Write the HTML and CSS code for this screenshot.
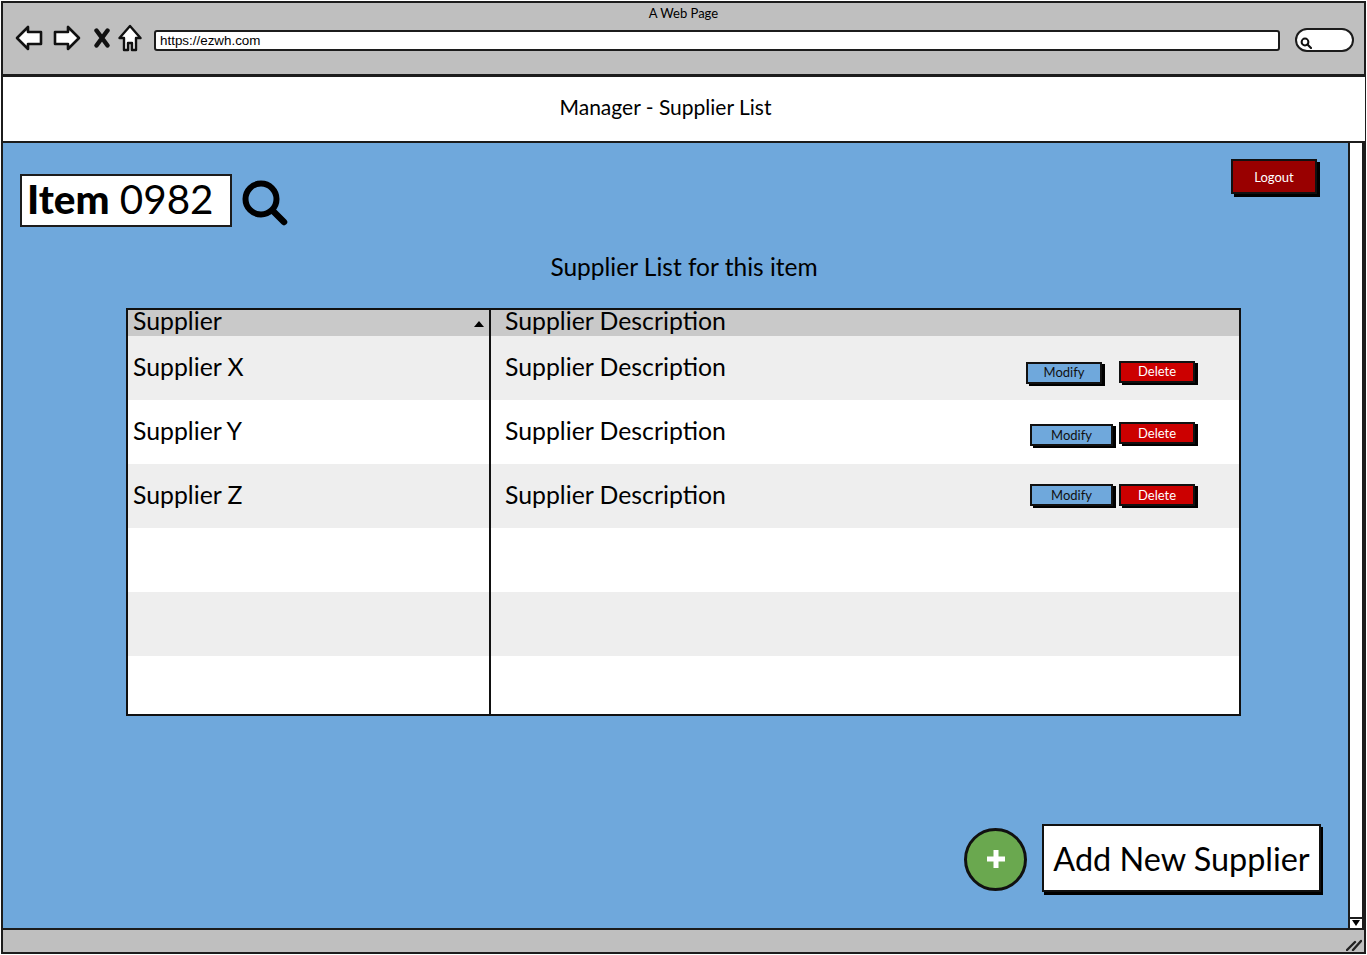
FILE: index.html
```html
<!DOCTYPE html>
<html lang="en">
<head>
    <meta charset="UTF-8">
    <meta name="viewport" content="width=device-width, initial-scale=1.0">
    <title>Manager - Supplier List</title>
    <link rel="stylesheet" href="styles.css">
</head>
<body>

    <div class="window">
        <div class="browser-bar">
            <div class="browser-title">A Web Page</div>
            <div class="browser-tools">
                <div class="nav-icons">
                    <svg class="nav-icon" width="28" height="26" viewBox="0 0 28 26"><path d="M2 13 L13 2 L13 7 L26 7 L26 19 L13 19 L13 24 Z" fill="#fff" stroke="#111" stroke-width="2.6" stroke-linejoin="round"/></svg>
                    <svg class="nav-icon" width="28" height="26" viewBox="0 0 28 26"><path d="M26 13 L15 2 L15 7 L2 7 L2 19 L15 19 L15 24 Z" fill="#fff" stroke="#111" stroke-width="2.6" stroke-linejoin="round"/></svg>
                    <svg class="nav-icon stop-icon" width="16" height="20" viewBox="0 0 16 20"><path d="M2.5 2.5 L13.5 17.5 M13.5 2.5 L2.5 17.5" fill="none" stroke="#111" stroke-width="4.4" stroke-linecap="round"/></svg>
                    <svg class="nav-icon home-icon" width="24" height="28" viewBox="0 0 24 28"><path d="M12 2 L22.5 14 L18 14 L18 26 L14 26 L14 19 L10 19 L10 26 L6 26 L6 14 L1.5 14 Z" fill="#fff" stroke="#111" stroke-width="2.4" stroke-linejoin="round"/></svg>
                </div>
                <div class="address-bar">https://ezwh.com</div>
                <div class="search-pill">
                    <svg width="12" height="12" viewBox="0 0 12 12"><circle cx="5" cy="5" r="3.4" fill="none" stroke="#111" stroke-width="2"/><path d="M7.5 7.5 L11 11" stroke="#111" stroke-width="2.2" stroke-linecap="round"/></svg>
                </div>
            </div>
        </div>

        <div class="page-title">Manager - Supplier List</div>

        <div class="content">
            <div class="main">
                <div class="top-row">
                    <div class="item-search">
                        <div class="item-box"><b>Item</b> 0982</div>
                        <svg width="46" height="46" viewBox="0 0 46 46"><circle cx="19" cy="19" r="15.5" fill="none" stroke="#000" stroke-width="6"/><path d="M31 31 L42 42" stroke="#000" stroke-width="6.5" stroke-linecap="round"/></svg>
                    </div>
                    <button class="btn btn-logout">Logout</button>
                </div>

                <h2 class="list-heading">Supplier List for this item</h2>

                <table class="supplier-table">
                    <thead>
                        <tr>
                            <th class="col-name">Supplier<span class="sort-arrow"></span></th>
                            <th class="col-desc">Supplier Description</th>
                        </tr>
                    </thead>
                    <tbody>
                        <tr>
                            <td class="col-name">Supplier X</td>
                            <td class="col-desc">
                                <div class="desc-row">
                                    Supplier Description
                                    <div class="actions actions-first">
                                        <button class="btn btn-modify">Modify</button>
                                        <button class="btn btn-delete">Delete</button>
                                    </div>
                                </div>
                            </td>
                        </tr>
                        <tr>
                            <td class="col-name">Supplier Y</td>
                            <td class="col-desc">
                                <div class="desc-row">
                                    Supplier Description
                                    <div class="actions actions-second">
                                        <button class="btn btn-modify btn-wide">Modify</button>
                                        <button class="btn btn-delete">Delete</button>
                                    </div>
                                </div>
                            </td>
                        </tr>
                        <tr>
                            <td class="col-name">Supplier Z</td>
                            <td class="col-desc">
                                <div class="desc-row">
                                    Supplier Description
                                    <div class="actions">
                                        <button class="btn btn-modify btn-wide">Modify</button>
                                        <button class="btn btn-delete">Delete</button>
                                    </div>
                                </div>
                            </td>
                        </tr>
                        <tr><td class="col-name"></td><td class="col-desc"></td></tr>
                        <tr><td class="col-name"></td><td class="col-desc"></td></tr>
                        <tr class="last-row"><td class="col-name"></td><td class="col-desc"></td></tr>
                    </tbody>
                </table>

                <div class="add-row">
                    <div class="add-circle">
                        <svg width="20" height="20" viewBox="0 0 20 20"><path d="M10 1 V19 M1 10 H19" stroke="#fff" stroke-width="5"/></svg>
                    </div>
                    <button class="btn-add">Add New Supplier</button>
                </div>
            </div>

            <div class="scrollbar">
                <div class="scroll-down"></div>
            </div>
        </div>

        <div class="status-bar">
            <svg width="16" height="12" viewBox="0 0 16 12"><path d="M1 11 L9 3 M7 11 L15 2" stroke="#222" stroke-width="2.4" stroke-linecap="round"/></svg>
        </div>
    </div>

</body>
</html>
```

FILE: styles.css
```css
* {
    box-sizing: border-box;
}
html, body {
    height: 100%;
}
body {
    margin: 0;
    padding: 1px 1px 1px 1px;
    overflow: hidden;
    background: #fff;
    color: #000;
    font-family: Lato, "Open Sans", sans-serif;
}
button {
    font-family: inherit;
    cursor: pointer;
}
.window {
    width: 1365px;
    height: 953px;
    border: 2px solid #1c1c1c;
    display: flex;
    flex-direction: column;
}

/* browser chrome */
.browser-bar {
    height: 71px;
    background: #bfbfbf;
    padding-top: 2px;
}
.browser-title {
    text-align: center;
    font-size: 13px;
    line-height: 16px;
}
.browser-tools {
    display: flex;
    align-items: center;
    padding-left: 12px;
    margin-top: 2px;
}
.nav-icons {
    display: flex;
    align-items: center;
    width: 139px;
}
.nav-icon {
    margin-right: 10px;
}
.stop-icon {
    margin-left: 3px;
    margin-right: 8px;
}
.address-bar {
    width: 1126px;
    height: 21px;
    margin-top: 6px;
    padding-left: 4px;
    background: #fff;
    border: 2px solid #1c1c1c;
    border-radius: 3px;
    font-family: "Liberation Sans", Arial, sans-serif;
    font-size: 13.4px;
    line-height: 17px;
}
.search-pill {
    width: 59px;
    height: 24px;
    margin-left: 15px;
    margin-top: 5px;
    padding: 3px 0 0 3px;
    background: #fff;
    border: 2px solid #1c1c1c;
    border-radius: 12px;
}
.page-title {
    height: 69px;
    background: #fff;
    border-top: 3px solid #1c1c1c;
    border-bottom: 2px solid #1c1c1c;
    text-align: center;
    font-size: 21px;
    line-height: 60px;
    margin-right: -1px;
    padding-right: 37px;
}

/* page body */
.content {
    flex: 1;
    display: flex;
    background: #6fa8dc;
    min-height: 0;
}
.main {
    flex: 1;
    padding: 16px 31px 0 17px;
}
.top-row {
    display: flex;
    justify-content: space-between;
    align-items: flex-start;
    height: 69px;
}
.item-search {
    display: flex;
    align-items: flex-start;
    gap: 10px;
    margin-top: 15px;
}
.item-search svg {
    margin-top: 6px;
}
.item-box {
    width: 212px;
    height: 53px;
    padding-left: 5px;
    background: #fff;
    border: 2px solid #1c1c1c;
    font-size: 40.4px;
    line-height: 46px;
    white-space: nowrap;
}
.item-box b {
    font-weight: 900;
}
.btn {
    border: 2px solid #111;
    box-shadow: 2px 2px 0 #000;
    padding: 0;
    font-size: 13px;
}
.btn-logout {
    width: 86px;
    height: 35px;
    background: #990000;
    color: #fff;
    box-shadow: 3px 3px 0 #000;
}
.list-heading {
    margin: 24px 0 0 0;
    text-align: center;
    font-size: 24.5px;
    font-weight: 400;
    line-height: 30px;
    padding-left: 31px;
}

/* supplier table */
.supplier-table {
    width: 1115px;
    margin: 26px 0 0 106px;
    border: 2px solid #111;
    border-collapse: separate;
    border-spacing: 0;
    table-layout: fixed;
    background: #fff;
}
.supplier-table th, .supplier-table td {
    padding: 0 0 4px 0;
    font-size: 24.8px;
    font-weight: 400;
    text-align: left;
}
.supplier-table th {
    height: 26px;
    background: #c9c9c9;
    line-height: 22px;
}
.supplier-table td {
    height: 64px;
}
.supplier-table tbody tr:nth-child(odd) {
    background: #eeeeee;
}
.supplier-table .last-row td {
    height: 58px;
}
.col-name {
    width: 363px;
    padding-left: 5px !important;
    border-right: 2px solid #111;
    position: relative;
}
.col-desc {
    padding-left: 14px !important;
}
.sort-arrow {
    position: absolute;
    right: 5px;
    top: 11px;
    border-left: 5px solid transparent;
    border-right: 5px solid transparent;
    border-bottom: 6px solid #000;
}
.desc-row {
    display: flex;
    justify-content: space-between;
    align-items: center;
    padding-right: 44px;
}
.actions {
    display: flex;
    align-items: flex-start;
    gap: 6px;
    margin-top: 2px;
}
.actions-first {
    gap: 17px;
    margin-top: 12px;
}
.actions-first .btn-modify {
    margin-top: 1px;
}
.actions-second {
    margin-top: 8px;
}
.actions-second .btn-modify {
    margin-top: 2px;
}
.btn-modify, .btn-delete {
    width: 76px;
    height: 22px;
    box-shadow: 3px 2px 0 #000;
    line-height: 17px;
}
.btn-modify {
    background: #6fa8dc;
    color: #111;
}
.btn-wide {
    width: 83px;
}
.btn-delete {
    background: #cc0000;
    color: #fff;
}

/* add supplier */
.add-row {
    display: flex;
    justify-content: flex-end;
    align-items: center;
    gap: 15px;
    margin-top: 108px;
    margin-right: -4px;
}
.add-circle {
    width: 63px;
    height: 63px;
    margin-top: 2px;
    border: 3px solid #111;
    border-radius: 50%;
    background: #6aa84f;
    display: flex;
    align-items: center;
    justify-content: center;
}
.btn-add {
    width: 279px;
    height: 68px;
    background: #fff;
    border: 2px solid #111;
    box-shadow: 2px 3px 0 #000;
    padding: 0;
    font-size: 32.4px;
}
.scrollbar {
    width: 16px;
    background: #fff;
    border-left: 2px solid #1c1c1c;
    border-right: 2px solid #1c1c1c;
    display: flex;
    align-items: flex-end;
}
.scroll-down {
    width: 100%;
    height: 11px;
    border-top: 2px solid #1c1c1c;
    position: relative;
}
.scroll-down::after {
    content: "";
    position: absolute;
    left: 2px;
    top: 1px;
    border-left: 4px solid transparent;
    border-right: 4px solid transparent;
    border-top: 6px solid #000;
}
.status-bar {
    height: 24px;
    background: #bfbfbf;
    border-top: 2px solid #1c1c1c;
    display: flex;
    justify-content: flex-end;
    align-items: flex-end;
    padding: 0 2px 1px 0;
}
```
